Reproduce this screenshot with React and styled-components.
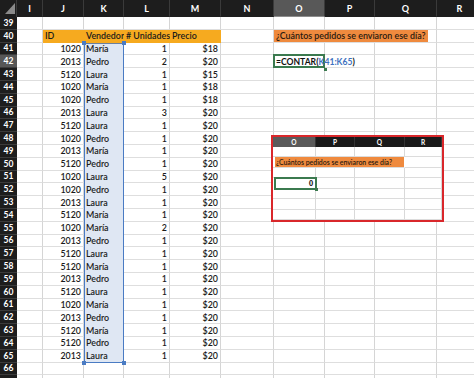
import React from "react";
import styled, { createGlobalStyle } from "styled-components";

const Global = createGlobalStyle`
  html, body { margin: 0; padding: 0; background: #ffffff; overflow: hidden; }
  body { font-family: Lato, "Liberation Sans", Arial, sans-serif; }
`;

const Page = styled.div`
  position: relative;
  width: 474px;
  height: 378px;
  overflow: hidden;
  background: #ffffff;
`;

const Sheet = styled.div`
  display: grid;
  grid-template-columns: 17px 26px 41px 40px 46px 51px 53px 51px 50px 62px 46px;
  grid-template-rows: 17px repeat(29, 12.8px);
  font-family: Lato, "Liberation Sans", Arial, sans-serif;
  font-size: 8.9px;
  font-weight: 600;
  color: #1b1b1b;
`;

const Corner = styled.div`
  grid-row: 1;
  grid-column: 1;
  background: #1d1d1d;
  border-right: 1px solid #3a3a3a;
  display: flex;
  align-items: flex-start;
  justify-content: flex-end;
  padding: 3px 1px 0 0;
  box-sizing: border-box;
`;

const ColHead = styled.div`
  grid-row: 1;
  grid-column: ${(p) => p.$c};
  background: ${(p) => (p.$active ? "#585858" : "#1d1d1d")};
  border-right: 1px solid #3a3a3a;
  border-bottom: 1px solid ${(p) => (p.$active ? "#8c8c8c" : "#1d1d1d")};
  color: #ffffff;
  font-weight: 700;
  font-size: 9px;
  display: flex;
  align-items: center;
  justify-content: center;
  box-sizing: border-box;
`;

const RowHead = styled.div`
  grid-row: ${(p) => p.$r};
  grid-column: 1;
  background: ${(p) => (p.$active ? "#575757" : "#1d1d1d")};
  border-bottom: 1px solid #3b3b3b;
  color: #ffffff;
  font-weight: 700;
  font-size: 8.5px;
  display: flex;
  align-items: center;
  justify-content: center;
  box-sizing: border-box;
`;

const Cell = styled.div`
  grid-row: ${(p) => p.$r};
  grid-column: ${(p) => p.$c} / span ${(p) => p.$span || 1};
  background: ${(p) => p.$bg || "transparent"};
  border-right: 1px solid ${(p) => p.$bg || "#d5d5d5"};
  border-bottom: 1px solid ${(p) => p.$bg || "#dedede"};
  display: flex;
  align-items: center;
  justify-content: ${(p) => (p.$right ? "flex-end" : "flex-start")};
  padding: 0 2px 0 2px;
  white-space: nowrap;
  min-width: 0;
  box-sizing: border-box;
`;

const Band = styled.div`
  width: 154px;
  height: 100%;
  margin-left: -2px;
  background: #ef8a3e;
  display: flex;
  align-items: center;
  padding-left: 2px;
  box-sizing: border-box;
  color: #2a1a10;
`;

const ActiveCell = styled.div`
  grid-row: ${(p) => p.$r};
  grid-column: ${(p) => p.$c};
  position: relative;
  z-index: 2;
  display: flex;
  align-items: center;
  padding-left: 2px;
  white-space: nowrap;
  font-size: 8.6px;
  font-weight: 700;
  color: #111;
  box-sizing: border-box;
  &::before {
    content: "";
    position: absolute;
    inset: -1px 0 0 -1px;
    border: 2px solid #3b7a4f;
    z-index: -1;
  }
  &::after {
    content: "";
    position: absolute;
    right: -2px;
    bottom: -3px;
    width: 3px;
    height: 3px;
    background: #3b7a4f;
  }
`;

const Ref = styled.span`
  color: #3f72c0;
`;

const Selection = styled.div`
  grid-row: ${(p) => p.$r} / span ${(p) => p.$span};
  grid-column: ${(p) => p.$c};
  position: relative;
  z-index: 1;
  border: 1px solid #4a7bc3;
  border-top-color: #6a7f9e;
  pointer-events: none;
`;

const Handle = styled.div`
  position: absolute;
  width: 4px;
  height: 4px;
  background: #4a7bc3;
  ${(p) => (p.$top ? "top: -3px;" : "bottom: -3px;")}
  ${(p) => (p.$left ? "left: -3px;" : "right: -3px;")}
`;

/* Inset (pasted preview of the result) */
const Inset = styled.div`
  position: absolute;
  left: 271px;
  top: 135px;
  width: 173px;
  height: 87px;
  border: 2px solid #d9272b;
  box-sizing: border-box;
  background: #ffffff;
  display: grid;
  grid-template-columns: 43px 39px 50px 1fr;
  grid-template-rows: 10px repeat(7, 1fr);
  font-family: Lato, "Liberation Sans", Arial, sans-serif;
  font-weight: 600;
  color: #1b1b1b;
`;

const MiniHead = styled.div`
  background: ${(p) => (p.$active ? "#5a5a5a" : "#1a1a1a")};
  border-right: 1px solid #333;
  color: #fff;
  font-size: 6.5px;
  font-weight: 700;
  display: flex;
  align-items: center;
  justify-content: center;
`;

const MiniCell = styled.div`
  grid-column: span ${(p) => p.$span || 1};
  border-right: 1px solid ${(p) => (p.$span ? "transparent" : "#d9d9d9")};
  border-bottom: 1px solid #dcdcdc;
  box-sizing: border-box;
  display: flex;
  align-items: center;
  min-width: 0;
`;

const MiniBand = styled.div`
  width: 130px;
  height: 100%;
  margin-left: 2px;
  background: #ef8a3e;
  font-size: 6.9px;
  display: flex;
  align-items: center;
  padding-left: 1px;
  white-space: nowrap;
  color: #2a1a10;
`;

const MiniActive = styled.div`
  position: relative;
  margin-left: 2px;
  outline: 2px solid #3b7a4f;
  outline-offset: -1px;
  display: flex;
  align-items: center;
  justify-content: flex-end;
  padding-right: 3px;
  font-size: 7px;
  font-weight: 800;
  &::after {
    content: "";
    position: absolute;
    right: -2px;
    bottom: -2px;
    width: 3px;
    height: 3px;
    background: #3b7a4f;
  }
`;

const COLS = ["I", "J", "K", "L", "M", "N", "O", "P", "Q", "R"];

const DATA = [
  [1020, "María", 1, 18],
  [2013, "Pedro", 2, 20],
  [5120, "Laura", 1, 15],
  [1020, "María", 1, 18],
  [1020, "Pedro", 1, 18],
  [2013, "Laura", 3, 20],
  [5120, "Laura", 1, 20],
  [1020, "Pedro", 1, 20],
  [2013, "María", 1, 20],
  [5120, "Pedro", 1, 20],
  [1020, "Laura", 5, 20],
  [1020, "Pedro", 1, 20],
  [2013, "Laura", 1, 20],
  [5120, "María", 1, 20],
  [1020, "María", 2, 20],
  [2013, "Pedro", 1, 20],
  [5120, "Laura", 1, 20],
  [5120, "María", 1, 20],
  [2013, "Pedro", 1, 20],
  [5120, "Laura", 1, 20],
  [1020, "María", 1, 20],
  [2013, "Pedro", 1, 20],
  [5120, "María", 1, 20],
  [5120, "Pedro", 1, 20],
  [2013, "Laura", 1, 20],
];

const AMBER = "#f6aa1f";
const QUESTION = "¿Cuántos pedidos se enviaron ese día?";

function rowCells(n) {
  const r = n - 37;
  const out = [
    <RowHead key="h" $r={r} $active={n === 42}>
      {n <= 66 ? n : ""}
    </RowHead>,
  ];
  const d = n >= 41 && n <= 65 ? DATA[n - 41] : null;
  for (let i = 0; i < COLS.length; i++) {
    const c = i + 2;
    const col = COLS[i];
    const key = col;
    if (n === 40) {
      if (col === "J") { out.push(<Cell key={key} $r={r} $c={c} $bg={AMBER}>ID</Cell>); continue; }
      if (col === "K") { out.push(<Cell key={key} $r={r} $c={c} $bg={AMBER}>Vendedor</Cell>); continue; }
      if (col === "L") { out.push(<Cell key={key} $r={r} $c={c} $bg={AMBER}># Unidades</Cell>); continue; }
      if (col === "M") { out.push(<Cell key={key} $r={r} $c={c} $bg={AMBER}>Precio</Cell>); continue; }
      if (col === "O") {
        out.push(
          <Cell key={key} $r={r} $c={c} $span={3}>
            <Band>{QUESTION}</Band>
          </Cell>
        );
        continue;
      }
      if (col === "P" || col === "Q") continue;
    }
    if (n === 42 && col === "O") {
      out.push(
        <ActiveCell key={key} $r={r} $c={c}>
          =CONTAR(<Ref>K41:K65</Ref>)
        </ActiveCell>
      );
      continue;
    }
    if (d) {
      if (col === "J") { out.push(<Cell key={key} $r={r} $c={c} $right>{d[0]}</Cell>); continue; }
      if (col === "K") { out.push(<Cell key={key} $r={r} $c={c} $bg="#dfe7f3">{d[1]}</Cell>); continue; }
      if (col === "L") { out.push(<Cell key={key} $r={r} $c={c} $right>{d[2]}</Cell>); continue; }
      if (col === "M") { out.push(<Cell key={key} $r={r} $c={c} $right>${d[3]}</Cell>); continue; }
    }
    out.push(<Cell key={key} $r={r} $c={c} />);
  }
  return out;
}

export default function App() {
  const rows = [];
  for (let n = 39; n <= 67; n++)
    rows.push(...rowCells(n).map((el) => React.cloneElement(el, { key: `${n}-${el.key}` })));

  const miniRows = [];
  for (let i = 0; i < 7; i++) {
    if (i === 1) {
      miniRows.push(
        <MiniCell key={`m${i}a`} $span={3}>
          <MiniBand>{QUESTION}</MiniBand>
        </MiniCell>,
        <MiniCell key={`m${i}b`} />
      );
    } else if (i === 3) {
      miniRows.push(
        <MiniActive key={`m${i}a`}>0</MiniActive>,
        <MiniCell key={`m${i}b`} />,
        <MiniCell key={`m${i}c`} />,
        <MiniCell key={`m${i}d`} />
      );
    } else {
      for (let j = 0; j < 4; j++) miniRows.push(<MiniCell key={`m${i}${j}`} />);
    }
  }

  return (
    <Page>
      <Global />
      <Sheet>
        <Corner>
          <svg width="10" height="11" viewBox="0 0 10 11">
            <polygon points="10,0 10,11 0,11" fill="#8a8a8a" />
          </svg>
        </Corner>
        {COLS.map((c, i) => (
          <ColHead key={c} $c={i + 2} $active={c === "O"}>{c}</ColHead>
        ))}
        {rows}
        <Selection $r={4} $span={25} $c={4}>
          <Handle $top $left />
          <Handle $top />
          <Handle $left />
          <Handle />
        </Selection>
      </Sheet>
      <Inset>
        {["O", "P", "Q", "R"].map((c) => (
          <MiniHead key={c} $active={c === "O"}>{c}</MiniHead>
        ))}
        {miniRows}
      </Inset>
    </Page>
  );
}
